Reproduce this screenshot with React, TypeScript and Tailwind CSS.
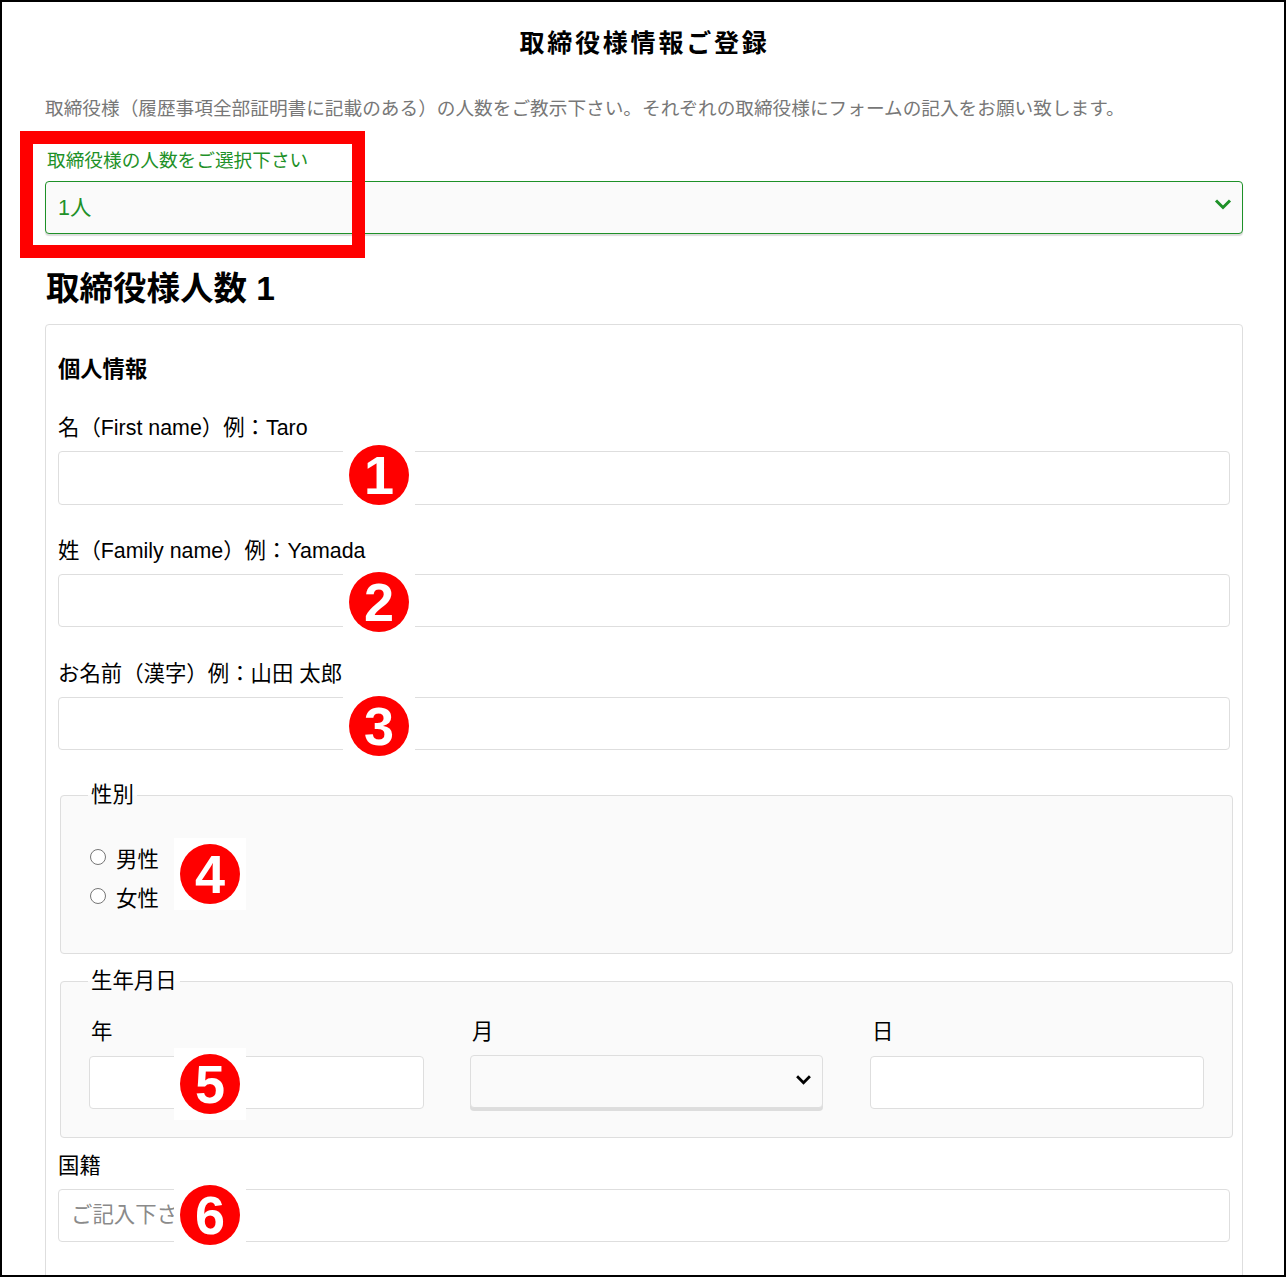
const font = 'font-["Liberation_Sans","Noto_Sans_CJK_JP",sans-serif]';

const inputClass =
  'block h-[53px] rounded-[4px] border border-[#dedede] bg-white px-3 text-[21.4px] leading-[28px] text-black outline-none placeholder:text-[#8a8a8a]';

const labelClass = 'block text-[21.4px] leading-[28px] text-black';

// 赤丸の番号（画像上の注釈）
const Marker = ({ n, className }: { n: number; className: string }) => (
  <div className={`absolute flex h-[72px] w-[72px] items-center justify-center bg-white ${className}`}>
    <div className="flex h-[60px] w-[60px] items-center justify-center rounded-full bg-[#ff0000] text-[54px] font-bold leading-none text-white">
      {n}
    </div>
  </div>
);

const Chevron = ({ className }: { className: string }) => (
  <svg viewBox="0 0 18 12" fill="none" className={`pointer-events-none absolute ${className}`}>
    <path d="M2 2.5 L9 9.5 L16 2.5" stroke="currentColor" strokeWidth="3" />
  </svg>
);

const Radio = ({ label, className }: { label: string; className: string }) => (
  <label className={`flex h-[28px] items-center ${className}`}>
    <span className="mb-[4px] ml-[29px] h-[16px] w-[16px] rounded-full border border-[#767676] bg-white" />
    <span className="ml-[10px] mt-px text-[21.4px] leading-[28px] text-black">{label}</span>
  </label>
);

export default function App() {
  return (
    <div className={`relative h-[1277px] w-[1286px] overflow-hidden border-2 border-black bg-white ${font}`}>
      <h1 className="ml-[3px] mt-[25px] text-center text-[25px] font-bold leading-[32px] tracking-[2.8px] text-black">
        取締役様情報ご登録
      </h1>

      <div className="ml-[43px] mr-[41px]">
        <p className="mt-[36px] whitespace-nowrap text-[18.67px] leading-[28px] text-[#777]">
          取締役様（履歴事項全部証明書に記載のある）の人数をご教示下さい。それぞれの取締役様にフォームの記入をお願い致します。
        </p>

        <label className="ml-[2px] mt-[26px] block text-[18.67px] leading-[24px] text-[#1e9128]">
          取締役様の人数をご選択下さい
        </label>
        <div className="relative mt-[8px] text-[#1e9128]">
          <select className="block h-[53px] w-full appearance-none rounded-[4px] border border-[#1e9128] bg-[#fafafa] px-3 pt-[2px] text-[21.4px] text-[#1e9128] shadow-[0_2px_1px_#dddddd] outline-none">
            <option>1人</option>
          </select>
          <Chevron className="right-[11px] top-[17px] h-[12px] w-[18px]" />
        </div>

        <h2 className="ml-px mt-[35px] text-[33.5px] font-bold leading-[40px] text-black">取締役様人数 1</h2>

        <div className="mt-[15px] h-[1100px] rounded-t-[4px] border border-[#dedede] bg-white px-3 pt-[31px]">
          <h3 className="text-[22.3px] font-bold leading-[28px] text-black">個人情報</h3>

          <label className={`${labelClass} mt-[30px]`}>名（First name）例：Taro</label>
          <input className={`${inputClass} mt-[9px] h-[54px] w-full`} />

          <label className={`${labelClass} mt-[32px]`}>姓（Family name）例：Yamada</label>
          <input className={`${inputClass} mt-[9px] w-full`} />

          <label className={`${labelClass} mt-[33px]`}>お名前（漢字）例：山田 太郎</label>
          <input className={`${inputClass} mt-[9px] w-full`} />

          <fieldset className="ml-[2px] mr-[-3px] mt-[31px] h-[173px] rounded-[4px] border border-[#dedede] bg-[#fafafa]">
            <legend className="ml-[27px] px-[3px] text-[21.4px] leading-[28px] text-black">性別</legend>
            <Radio label="男性" className="mt-[36px]" />
            <Radio label="女性" className="mt-[11px]" />
          </fieldset>

          <fieldset className="ml-[2px] mr-[-3px] mt-[13px] h-[171px] rounded-[4px] border border-[#dedede] bg-[#fafafa]">
            <legend className="ml-[27px] px-[3px] text-[21.4px] leading-[28px] text-black">生年月日</legend>
            <div className="ml-[28px] mt-[23px] flex">
              <div className="w-[335px]">
                <label className={`${labelClass} ml-[2px]`}>年</label>
                <input className={`${inputClass} mt-[10px] w-full`} />
              </div>
              <div className="ml-[46px] w-[353px]">
                <label className={`${labelClass} ml-[2px]`}>月</label>
                <div className="relative mt-[9px] text-black">
                  <select className="block h-[53px] w-full appearance-none rounded-[4px] border border-[#dedede] bg-[#fafafa] px-3 shadow-[0_3px_0_#dddddd] outline-none" />
                  <Chevron className="right-[11px] top-[19px] h-[11px] w-[17px]" />
                </div>
              </div>
              <div className="ml-[47px] w-[334px]">
                <label className={`${labelClass} ml-[2px]`}>日</label>
                <input className={`${inputClass} mt-[10px] w-full`} />
              </div>
            </div>
          </fieldset>

          <label className={`${labelClass} mt-[14px]`}>国籍</label>
          <input className={`${inputClass} mt-[9px] w-full`} placeholder="ご記入下さい" />
        </div>
      </div>

      {/* 注釈 */}
      <div className="absolute left-[18px] top-[129px] h-[127px] w-[345px] border-[13px] border-[#ff0000]" />
      <Marker n={1} className="left-[341px] top-[437px]" />
      <Marker n={2} className="left-[341px] top-[564px]" />
      <Marker n={3} className="left-[341px] top-[688px]" />
      <Marker n={4} className="left-[172px] top-[836px]" />
      <Marker n={5} className="left-[172px] top-[1046px]" />
      <Marker n={6} className="left-[172px] top-[1177px]" />
    </div>
  );
}
